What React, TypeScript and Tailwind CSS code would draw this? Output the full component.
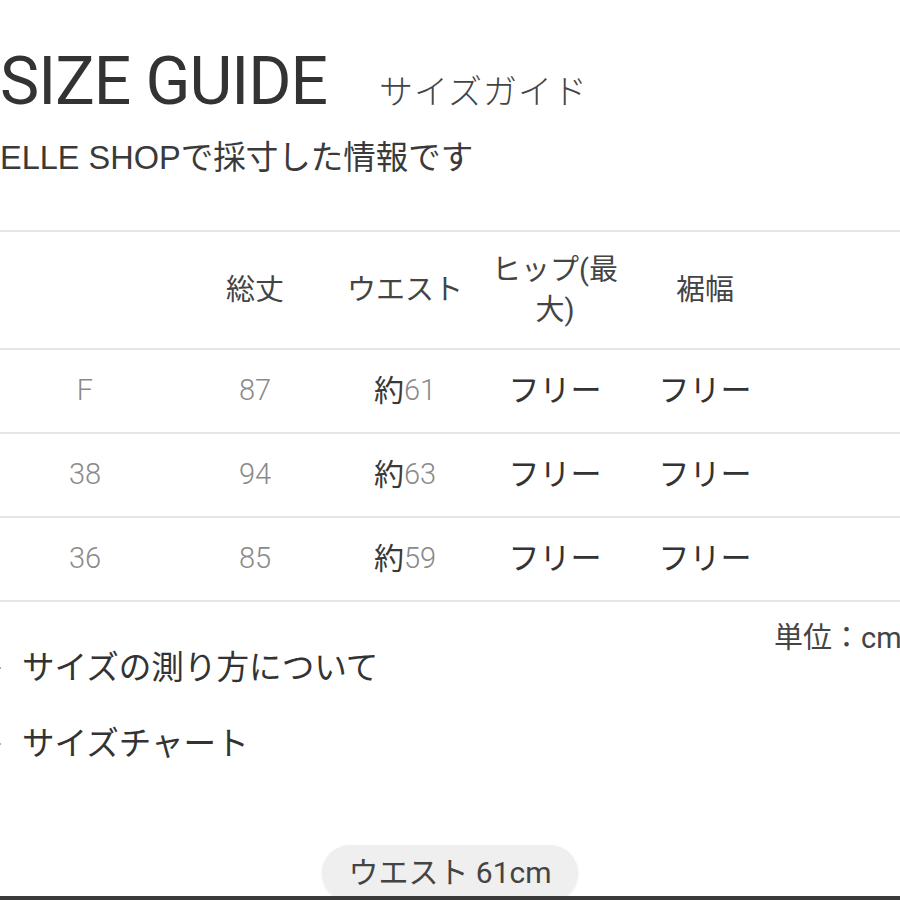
import React from "react";

const font = { fontFamily: "Roboto, 'Noto Sans CJK JP', sans-serif" };

function Num({ children }: { children: React.ReactNode }) {
  return <span className="font-light text-[#8a8a8a]">{children}</span>;
}

function Cell({ children, shift }: { children: React.ReactNode; shift?: boolean }) {
  return (
    <div className={shift ? "flex items-center justify-center pl-[18px] pr-[8px] text-center" : "flex items-center justify-center px-[8px] text-center"}>
      {children}
    </div>
  );
}

const rows: { size: string; len: string; waist: string }[] = [
  { size: "F", len: "87", waist: "61" },
  { size: "38", len: "94", waist: "63" },
  { size: "36", len: "85", waist: "59" },
];

function Chevron() {
  return (
    <svg width="14" height="14" viewBox="0 0 14 14" className="ml-[-9px] mr-[17px] shrink-0">
      <path d="M4 3 L9 7 L4 11" fill="none" stroke="#777" strokeWidth="1.6" />
    </svg>
  );
}

export default function App() {
  return (
    <div className="relative w-[900px] h-[900px] overflow-hidden bg-white flex flex-col text-[#333]" style={font}>
      <div className="pt-[49px] flex items-baseline whitespace-nowrap">
        <h1 className="text-[66px] leading-none tracking-[-1px] text-[#333] font-normal">SIZE GUIDE</h1>
        <span className="ml-[52px] text-[34px] leading-none font-light tracking-[1px] text-[#444]">サイズガイド</span>
      </div>
      <p
        className="mt-[27px] text-[32.5px] leading-none text-[#3a3a3a] whitespace-nowrap"
        style={{ fontFamily: "'Liberation Sans', 'Noto Sans CJK JP', sans-serif" }}
      >
        ELLE SHOPで採寸した情報です
      </p>

      <div className="mt-[55px] border-t-2 border-[#e6e6e6] text-[29px]">
        <div className="grid grid-cols-[170px_160px_150px_150px_150px_1fr] h-[118px] border-b-2 border-[#e6e6e6] text-[#444] leading-[40px]">
          <Cell>{""}</Cell>
          <Cell shift>総丈</Cell>
          <Cell>ウエスト</Cell>
          <Cell>ヒップ(最大)</Cell>
          <Cell>裾幅</Cell>
          <div />
        </div>
        {rows.map((r) => (
          <div
            key={r.size}
            className="grid grid-cols-[170px_160px_150px_150px_150px_1fr] h-[84px] border-b-2 border-[#e6e6e6] leading-none"
          >
            <Cell>
              <Num>{r.size}</Num>
            </Cell>
            <Cell shift>
              <Num>{r.len}</Num>
            </Cell>
            <Cell>
              <span className="text-[#3a3a3a] text-[30px]">約</span>
              <Num>{r.waist}</Num>
            </Cell>
            <Cell>
              <span className="text-[#333] text-[31px]">フリー</span>
            </Cell>
            <Cell>
              <span className="text-[#333] text-[31px]">フリー</span>
            </Cell>
            <div />
          </div>
        ))}
      </div>

      <div className="mt-[22px] pl-[774px] text-[29px] leading-[28px] whitespace-nowrap text-[#444]">単位：cm</div>

      <div className="flex flex-col gap-[44px] text-[32.6px] leading-[32px] text-[#333]">
        <div className="flex items-center whitespace-nowrap">
          <Chevron />
          <span>サイズの測り方について</span>
        </div>
        <div className="flex items-center whitespace-nowrap">
          <Chevron />
          <span>サイズチャート</span>
        </div>
      </div>

      <div className="mt-[85px] flex justify-center">
        <div className="w-[256px] h-[56px] rounded-full bg-[#efefef] flex items-center justify-center text-[30px] text-[#444] shadow-[0_1px_3px_rgba(0,0,0,0.08)]">
          ウエスト 61cm
        </div>
      </div>

      <div className="absolute left-0 right-0 bottom-0 h-[4px] bg-[#3a3a3a]" />
    </div>
  );
}
